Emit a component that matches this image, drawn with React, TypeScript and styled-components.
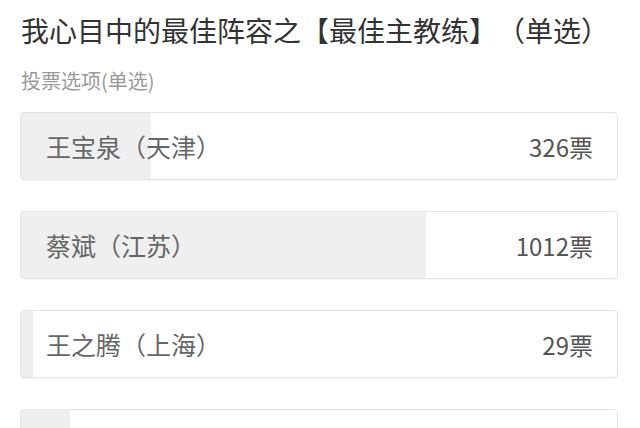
import React from 'react';
import styled, { createGlobalStyle } from 'styled-components';

const GlobalStyle = createGlobalStyle`
  html, body {
    margin: 0;
    padding: 0;
    background: #ffffff;
  }
  body {
    font-family: "Noto Sans CJK SC", "Noto Sans", "Liberation Sans", sans-serif;
    text-spacing-trim: space-all;
  }
`;

const Page = styled.div`
  display: flex;
  flex-direction: column;
  padding: 0 22px 0 20px;
`;

const Title = styled.h1`
  margin: 11px 0 0 1px;
  font-size: 28px;
  line-height: 38px;
  font-weight: 400;
  color: #333333;
  white-space: nowrap;
`;

const SubTitle = styled.div`
  margin: 19px 0 0 1px;
  font-size: 20px;
  line-height: 26px;
  color: #9a9a9a;
`;

const OptionList = styled.div`
  display: flex;
  flex-direction: column;
  gap: 31px;
  margin-top: 18px;
`;

const OptionCard = styled.div<{ $percent: number }>`
  display: flex;
  flex-direction: row;
  align-items: center;
  justify-content: space-between;
  height: 66px;
  padding: 0 24px 0 25px;
  border: 1px solid #e4e4e4;
  border-radius: 4px;
  box-shadow: 0 1px 1px rgba(0, 0, 0, 0.04);
  background: ${({ $percent }) =>
    `linear-gradient(to right, #efefef ${$percent}%, #ffffff ${$percent}%)`};
`;

const OptionName = styled.span`
  font-size: 25px;
  color: #666666;
  white-space: nowrap;
`;

const VoteCount = styled.span`
  font-size: 24px;
  color: #555555;
  white-space: nowrap;
`;

type Option = {
  name: string;
  votes: number;
};

const options: Array<Option> = [
  { name: '王宝泉（天津）', votes: 326 },
  { name: '蔡斌（江苏）', votes: 1012 },
  { name: '王之腾（上海）', votes: 29 },
  { name: '许利民（北京）', votes: 123 },
];

const App = () => {
  const total = options.reduce((sum, o) => sum + o.votes, 0);

  return (
    <>
      <GlobalStyle />
      <Page>
        <Title>我心目中的最佳阵容之【最佳主教练】（单选）</Title>
        <SubTitle>投票选项(单选)</SubTitle>
        <OptionList>
          {options.map((option) => (
            <OptionCard key={option.name} $percent={(option.votes / total) * 100}>
              <OptionName>{option.name}</OptionName>
              <VoteCount>{`${option.votes}票`}</VoteCount>
            </OptionCard>
          ))}
        </OptionList>
      </Page>
    </>
  );
};

export default App;
